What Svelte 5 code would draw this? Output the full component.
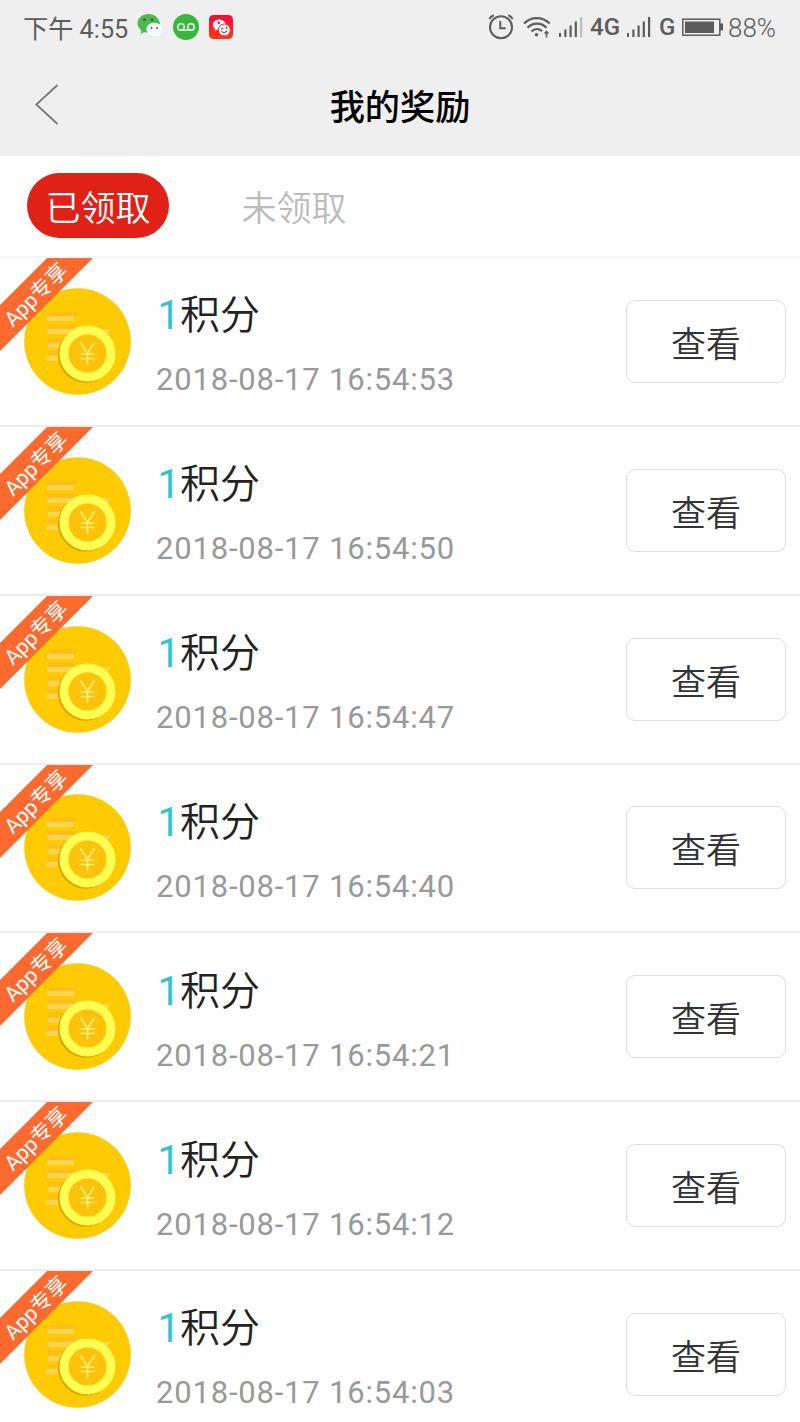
<script>
  const tabs = ['已领取', '未领取']
  let active = $state(0)

  const day = '2018-08-17'
  const rewards = [
    { points: 1, time: '16:54:53' },
    { points: 1, time: '16:54:50' },
    { points: 1, time: '16:54:47' },
    { points: 1, time: '16:54:40' },
    { points: 1, time: '16:54:21' },
    { points: 1, time: '16:54:12' },
    { points: 1, time: '16:54:03' }
  ]
</script>

<div class="screen">
  <header>
    <div class="status">
      <span class="clock">下午 4:55</span>
      <svg class="wechat" width="26" height="26" viewBox="0 0 26 26">
        <path d="M11.500 0C5.500 0 0.500 4 0.500 9.300c0 3 1.500 5.300 3.900 7l-.8 3.900 3.600-2.300c1.500.5 3 .6 4.800.5L23 10C22.500 4 17.500 0 11.500 0z" fill="#4fb950" />
        <circle cx="7.500" cy="5.800" r="1.300" fill="#25652a" />
        <circle cx="15" cy="5.800" r="1.300" fill="#25652a" />
        <path d="M17.300 8.700c-4.500 0-7.800 3-7.800 6.600 0 3.700 3.400 6.600 7.800 6.600 1 0 2-.1 2.900-.5l2.900 1.500-.7-2.500c1.700-1.200 2.900-3 2.900-5.100 0-3.600-3.500-6.600-8-6.600z" fill="#f7fbff" />
        <circle cx="14.500" cy="14" r="1" fill="#526259" />
        <circle cx="20" cy="14" r="1" fill="#526259" />
      </svg>
      <svg class="voice" width="26" height="26" viewBox="0 0 26 26">
        <circle cx="13" cy="13" r="13" fill="#36b83d" />
        <g fill="none" stroke="#fff" stroke-width="1.400">
          <circle cx="8" cy="13" r="3.200" />
          <circle cx="18" cy="13" r="3.200" />
          <path d="M8 16.200h10" />
        </g>
      </svg>
      <svg class="moments" width="24" height="24" viewBox="0 0 24 24">
        <defs>
          <linearGradient id="red" x2="0" y2="1">
            <stop stop-color="#f5093e" />
            <stop offset="1" stop-color="#fc3a10" />
          </linearGradient>
        </defs>
        <rect width="24" height="24" rx="4.500" fill="url(#red)" />
        <path d="M10 4.500c-3.500 0-6 2.300-6 5.200 0 1.800.8 3 2.200 4l-.5 2.300 2.600-1.300 3 .2 5.500-5C16.300 7 13.600 4.500 10 4.500z" fill="#fff" />
        <circle cx="15.300" cy="15" r="6" fill="#fff" stroke="#f52731" stroke-width="1" />
        <g fill="#e81e45">
          <circle cx="9.800" cy="7.700" r="1.300" />
          <circle cx="13" cy="13.500" r=".9" />
          <circle cx="17.500" cy="13" r=".9" />
        </g>
        <path d="M12.300 16c1.300 2.200 4.700 2 5.800-.5" fill="none" stroke="#e81e45" stroke-width="1.200" />
      </svg>

      <div class="system">
        <svg class="alarm" width="26" height="26" viewBox="0 0 26 26" fill="none" stroke="#5c5c5c" stroke-width="2">
          <circle cx="13" cy="13.300" r="11" />
          <path d="M12.300 7v7.200h5.500M1.300 5.200c.8-1.800 2.300-3.200 4.500-4M24.700 5.200c-.8-1.800-2.300-3.200-4.500-4" />
        </svg>
        <svg class="wifi" width="28" height="22" viewBox="0 0 28 22" fill="none" stroke="#5c5c5c" stroke-width="2.200">
          <path d="M1 7.500C8 .2 19.500.2 26.700 7.500M4.500 11.800c5.300-5.500 13.800-5.500 19 0M8.500 15.500c3.200-3.200 7.500-3.200 10.500-.3" />
          <circle cx="13.500" cy="18.800" r="1.800" fill="#5c5c5c" stroke="none" />
          <path d="M23.500 21.500v-5" stroke-width="1.600" />
          <path d="M20.700 17.500l2.800-3.200 2.800 3.200z" fill="#5c5c5c" stroke="none" />
        </svg>
        {@render signal(true)}
        <b class="lte">4G</b>
        {@render signal(false)}
        <b class="gsm">G</b>
        <svg class="battery" width="41" height="19" viewBox="0 0 41 19">
          <rect x=".8" y="1.200" width="37" height="16" fill="none" stroke="#5c5c5c" stroke-width="1.500" />
          <rect x="3" y="3.500" width="29" height="11.500" fill="#5c5c5c" />
          <path d="M38 5.500h3v7h-3z" fill="#5c5c5c" />
        </svg>
        <span class="percent">88%</span>
      </div>
    </div>
    <div class="navbar">
      <svg class="back" width="24" height="42" viewBox="0 0 24 42" fill="none" stroke="#777" stroke-width="1.800">
        <path d="M22.500 1L1.300 20.500l21.200 19.500" />
      </svg>
      <h1>我的奖励</h1>
    </div>
  </header>

  <nav>
    {#each tabs as tab, i}
      <button class:active={active === i} onclick={() => (active = i)}>{tab}</button>
    {/each}
  </nav>

  <ul>
    {#each rewards as reward}
      <li>
        {@render coins()}
        <div class="info">
          <div class="points"><span>{reward.points}</span>积分</div>
          <div class="date">{day} {reward.time}</div>
        </div>
        <button class="view">查看</button>
        <div class="ribbon">
          <svg width="93" height="93" viewBox="0 0 93 93">
            <path d="M47 0h46L0 93V47z" fill="#fd6a30" />
          </svg>
          <span>App专享</span>
        </div>
      </li>
    {/each}
  </ul>
</div>

{#snippet signal(weak)}
  <svg class="signal" width="24" height="20" viewBox="0 0 24 20" fill="#5c5c5c">
    <path d="M0 16h2v4H0zM5.300 12.500h2.200V20H5.300zM10.500 8.500h2.200V20h-2.200zM15.700 4.500h2.200V20h-2.200z" />
    <path d="M21 0h2.200v20H21z" fill={weak ? '#bdbdbd' : '#5c5c5c'} />
  </svg>
{/snippet}

{#snippet coins()}
  <svg class="coins" width="107" height="107" viewBox="0 0 107 107">
    <circle cx="53.500" cy="53.500" r="53.300" fill="#fecb02" />
    <g fill="#fdbd1c">
      <path d="M25 24h27v4H25zM24 37h29v4H24zM24 50h29v4H24zM24 63h29v4H24z" />
    </g>
    <g fill="#fed552">
      <rect x="23" y="28" width="27" height="5" rx="1" />
      <rect x="23" y="41" width="27" height="5" rx="1" />
      <rect x="24" y="55" width="24" height="5" rx="1" />
      <rect x="22" y="68" width="24" height="5" rx="1" />
      <path d="M70 41h17l-5 6H70z" />
    </g>
    <circle cx="61.800" cy="66.800" r="28" fill="#d9a600" />
    <circle cx="63.500" cy="65.500" r="23.500" fill="#fdc20b" stroke="#fffc52" stroke-width="9" />
    <path d="M56.500 54.500l7 11 7-11M63.500 65.500v11.500M56.500 66h14M56.500 70.500h14" fill="none" stroke="#fff176" stroke-width="1.700" />
  </svg>
{/snippet}

<style>
  :global(body) {
    background: #fff;
  }

  .screen {
    height: 1422px;
    overflow: hidden;
    background: #fff;
    font-family: Roboto, 'Noto Sans CJK SC', sans-serif;
    font-weight: 350;
  }

  header {
    height: 156px;
    background: #efefef;
  }

  .status {
    display: flex;
    align-items: center;
    height: 54px;
    padding: 0 23px;
    color: #5c5c5c;
  }

  .clock {
    width: 114px;
    margin-top: -1px;
    font-size: 25.200px;
    font-weight: 400;
    white-space: nowrap;
  }

  .voice {
    margin-left: 10px;
  }

  .moments {
    margin-left: 10px;
  }

  .system {
    display: flex;
    align-items: center;
    margin-left: auto;
  }

  .wifi {
    margin-left: 9px;
  }

  .signal {
    margin-left: 8px;
  }

  .system b {
    font-size: 24px;
    font-weight: 500;
  }

  .lte {
    width: 29px;
    margin-left: 7px;
  }

  .gsm {
    width: 16px;
    margin-left: 8px;
  }

  .battery {
    margin-left: 7px;
  }

  .percent {
    width: 49px;
    margin-left: 5px;
    padding-top: 2px;
    font-size: 26px;
  }

  .navbar {
    display: grid;
    grid-template-columns: 100px 1fr 100px;
    align-items: center;
    height: 102px;
  }

  .back {
    margin-left: 35px;
  }

  h1 {
    margin: 0;
    padding-top: 6px;
    font-size: 35.200px;
    font-weight: 500;
    line-height: 52px;
    text-align: center;
    color: #000;
  }

  nav {
    box-sizing: border-box;
    display: flex;
    gap: 54px;
    height: 100px;
    padding: 17px 27px;
  }

  button {
    font: inherit;
  }

  nav button {
    width: 142px;
    height: 65px;
    padding: 0;
    border: 0;
    border-radius: 33px;
    background: none;
    color: #bbb;
    font-size: 35px;
  }

  nav button.active {
    background: #e02118;
    color: #fff;
  }

  ul {
    margin: 0;
    padding: 0;
    list-style: none;
  }

  li {
    position: relative;
    box-sizing: border-box;
    display: flex;
    align-items: center;
    height: 168.850px;
    padding: 0 14px 0 24px;
    border-top: 2px solid #ececec;
    overflow: hidden;
  }

  li:first-child {
    border-top-color: #f5f5f5;
  }

  .info {
    margin-left: 25px;
    padding-top: 7px;
    white-space: nowrap;
  }

  .points {
    margin-left: 1.500px;
    font-size: 40px;
    line-height: 58px;
    color: #222;
  }

  .points span {
    font-weight: 400;
    color: #33c3cd;
  }

  .date {
    margin-top: 13px;
    font-size: 31px;
    font-weight: 400;
    line-height: 44px;
    letter-spacing: .800px;
    color: #999;
  }

  .view {
    width: 160px;
    height: 83px;
    margin-left: auto;
    padding: 0;
    border: 1.500px solid #ddd;
    border-radius: 9px;
    background: #fff;
    color: #333;
    font-size: 35px;
  }

  /* corner label laid over the coin icon */
  .ribbon {
    position: absolute;
    top: 0;
    left: 0;
    width: 93px;
    height: 93px;
  }

  .ribbon span {
    position: absolute;
    top: 37px;
    left: 36px;
    font-size: 21px;
    font-weight: 400;
    line-height: 20px;
    white-space: nowrap;
    color: #fff;
    transform: translate(-50%, -50%) rotate(-45deg);
  }
</style>
